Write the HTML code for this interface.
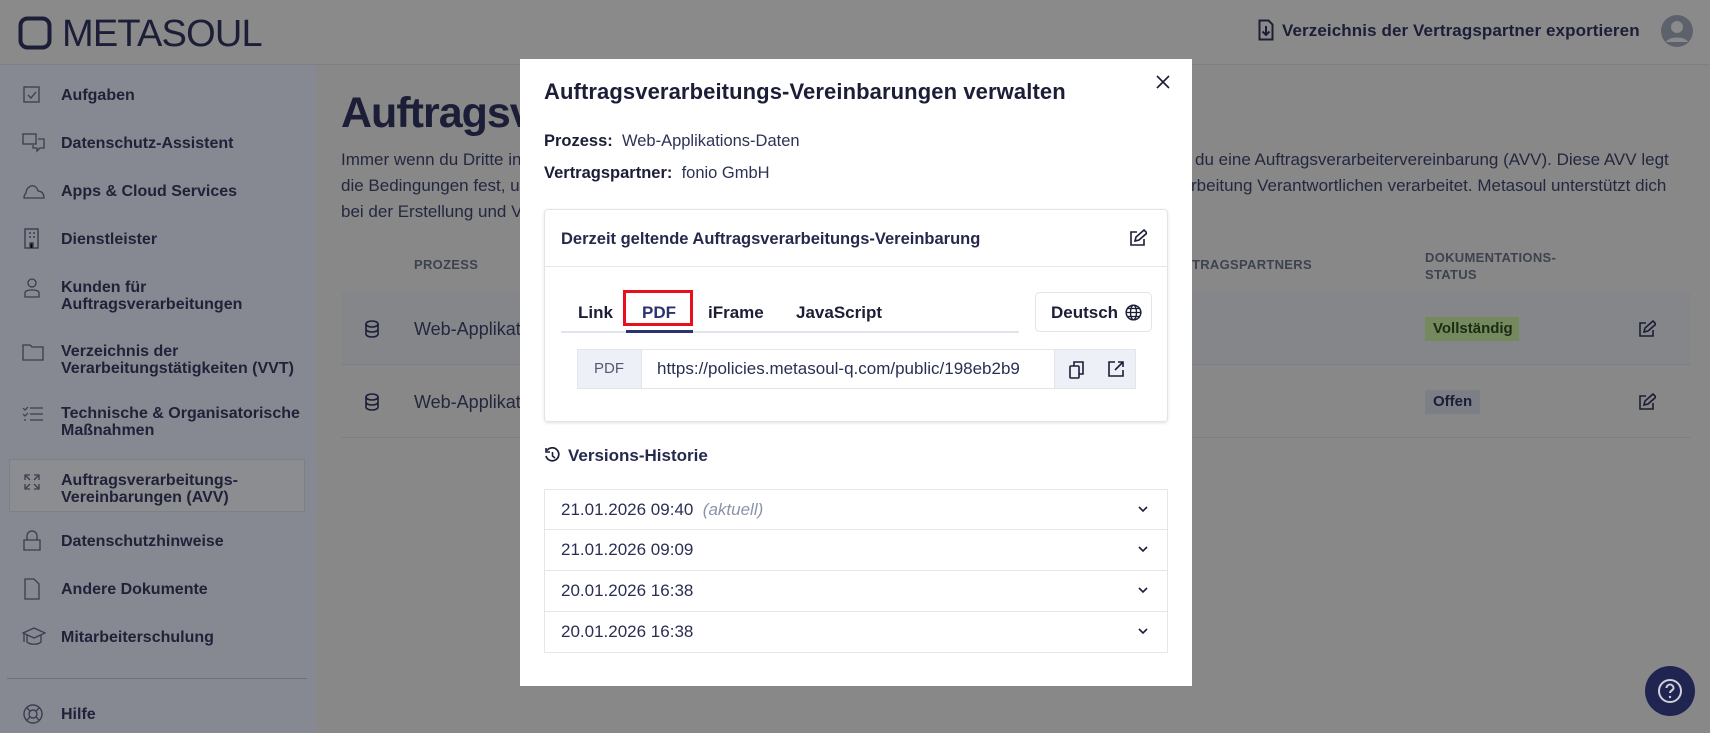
<!DOCTYPE html>
<html><head><meta charset="utf-8"><style>
*{margin:0;padding:0;box-sizing:border-box}
body{width:1710px;height:733px;overflow:hidden;background:#888888;font-family:"Liberation Sans",sans-serif;position:relative;color:#1b1e36}
.a{position:absolute;white-space:nowrap}
.hdr{position:absolute;left:0;top:0;width:1710px;height:65px;background:#8a8a8a;border-bottom:1px solid #7f7f80}
.side{position:absolute;left:0;top:65px;width:316px;height:668px;background:#868991}
.si{position:absolute;left:61px;font-size:16px;font-weight:bold;color:#1f2238;line-height:17px}
.ic{position:absolute;left:22px}
.mt{font-size:17px;color:#24283f}
.modal{position:absolute;left:520px;top:59px;width:672px;height:627px;background:#fff}
.m{position:absolute;white-space:nowrap}
.row{position:absolute;left:24px;width:624px;height:41px;border:1px solid #e3e6ed;border-top:none;font-size:17px;color:#2a2f52;padding-left:16px;line-height:40px}
.chev{position:absolute;right:18px;top:14px}
</style></head><body>
<div class="hdr"></div>
<svg class="a" style="left:18px;top:16px" width="34" height="34" viewBox="0 0 34 34"><rect x="2.5" y="2.5" width="29" height="29" rx="7" fill="none" stroke="#1b1e36" stroke-width="4"/></svg>
<div class="a" style="left:62px;top:13px;font-size:38px;color:#1b1e36;letter-spacing:-0.8px">METASOUL</div>
<svg class="a" style="left:1258px;top:19px" width="16" height="22" viewBox="0 0 16 22"><path d="M1.5 1.5h9l4 4v15h-13z" fill="none" stroke="#1b1e36" stroke-width="2"/><path d="M8 7v9M4.5 12.5L8 16l3.5-3.5" fill="none" stroke="#1b1e36" stroke-width="2"/></svg>
<div class="a" style="left:1282px;top:21px;font-size:17px;font-weight:bold;color:#1b1e36;letter-spacing:0.1px">Verzeichnis der Vertragspartner exportieren</div>
<svg class="a" style="left:1660px;top:14px" width="34" height="34" viewBox="0 0 34 34"><circle cx="17" cy="17" r="16" fill="#5d616b"/><circle cx="17" cy="13" r="6" fill="#8a8a8a"/><path d="M6 28c3-6 19-6 22 0" fill="#8a8a8a"/></svg>

<div class="side"></div>
<div class="a" style="left:9px;top:459px;width:296px;height:53px;background:#8c8d90;border:1px solid #7e8088"></div>
<svg class="ic" style="top:85px" width="20" height="20"><rect x="2" y="2" width="15" height="15" fill="none" stroke="#3a3d4e" stroke-width="1.3"/><path d="M6 10l3 3 5-6" fill="none" stroke="#3a3d4e" stroke-width="1.3"/></svg>
<div class="si" style="top:87px">Aufgaben</div>
<svg class="ic" style="top:133px" width="24" height="20"><rect x="1" y="1" width="13" height="10" fill="none" stroke="#3a3d4e" stroke-width="1.3"/><path d="M16 6h6v9h-4l-3 3v-3h-4v-3" fill="none" stroke="#3a3d4e" stroke-width="1.3"/></svg>
<div class="si" style="top:135px">Datenschutz-Assistent</div>
<svg class="ic" style="top:182px" width="24" height="18"><path d="M2 16h20c0-5-3-7-6-7-1-4-4-6-7-5-3 1-5 4-5 7-1 1-2 3-2 5z" fill="none" stroke="#3a3d4e" stroke-width="1.3"/></svg>
<div class="si" style="top:183px">Apps &amp; Cloud Services</div>
<svg class="ic" style="top:228px" width="20" height="22"><rect x="3" y="1" width="13" height="19" fill="none" stroke="#3a3d4e" stroke-width="1.4"/><path d="M7 5h2M11 5h2M7 9h2M11 9h2M8 20v-5h3v5" stroke="#3a3d4e" stroke-width="1.4"/></svg>
<div class="si" style="top:231px">Dienstleister</div>
<svg class="ic" style="top:277px" width="20" height="22"><circle cx="10" cy="6" r="4" fill="none" stroke="#3a3d4e" stroke-width="1.3"/><path d="M3 20v-4c0-2 2-3 7-3s7 1 7 3v4z" fill="none" stroke="#3a3d4e" stroke-width="1.3"/></svg>
<div class="si" style="top:279px">Kunden für<br>Auftragsverarbeitungen</div>
<svg class="ic" style="top:343px" width="22" height="18"><path d="M1 2h7l2 2h11v13H1z" fill="none" stroke="#3a3d4e" stroke-width="1.3"/></svg>
<div class="si" style="top:343px">Verzeichnis der<br>Verarbeitungstätigkeiten (VVT)</div>
<svg class="ic" style="top:405px" width="22" height="18"><path d="M8 3h13M8 9h13M8 15h13M1 3l2 2 3-3M1 9l2 2 3-3M2 15h2" fill="none" stroke="#3a3d4e" stroke-width="1.2"/></svg>
<div class="si" style="top:405px">Technische &amp; Organisatorische<br>Maßnahmen</div>
<svg class="ic" style="top:472px" width="20" height="20"><path d="M3 8V3h5M12 3h5v5M17 12v5h-5M8 17H3v-5M4 4l4 4M16 4l-4 4M16 16l-4-4M4 16l4-4" fill="none" stroke="#3a3d4e" stroke-width="1.3"/></svg>
<div class="si" style="top:472px">Auftragsverarbeitungs-<br>Vereinbarungen (AVV)</div>
<svg class="ic" style="top:530px" width="20" height="22"><path d="M5 10V6a5 5 0 0110 0v4M2 10h16v10H2z" fill="none" stroke="#3a3d4e" stroke-width="1.3"/></svg>
<div class="si" style="top:533px">Datenschutzhinweise</div>
<svg class="ic" style="top:578px" width="20" height="22"><path d="M3 1h9l5 5v15H3z" fill="none" stroke="#3a3d4e" stroke-width="1.3"/></svg>
<div class="si" style="top:581px">Andere Dokumente</div>
<svg class="ic" style="top:627px" width="24" height="20"><path d="M1 6l11-5 11 5-11 5zM5 8v7c3 3 11 3 14 0V8M2 7v8" fill="none" stroke="#3a3d4e" stroke-width="1.3"/></svg>
<div class="si" style="top:629px">Mitarbeiterschulung</div>
<div class="a" style="left:7px;top:678px;width:300px;height:1px;background:#6d7079"></div>
<svg class="ic" style="top:703px" width="22" height="22"><circle cx="11" cy="11" r="9" fill="none" stroke="#3a3d4e" stroke-width="1.4"/><circle cx="11" cy="11" r="4" fill="none" stroke="#3a3d4e" stroke-width="1.4"/><path d="M5 5l3 3M17 5l-3 3M5 17l3-3M17 17l-3-3" stroke="#3a3d4e" stroke-width="1.4"/></svg>
<div class="si" style="top:706px">Hilfe</div>

<div class="a" style="left:341px;top:89px;font-size:43px;font-weight:bold;color:#1b1e36;letter-spacing:-1px">Auftragsv</div>
<div class="a mt" style="left:341px;top:150px">Immer wenn du Dritte in</div>
<div class="a mt" style="left:341px;top:176px">die Bedingungen fest, u</div>
<div class="a mt" style="left:341px;top:202px">bei der Erstellung und V</div>
<div class="a mt" style="left:1195px;top:150px">du eine Auftragsverarbeitervereinbarung (AVV). Diese AVV legt</div>
<div class="a mt" style="left:1191px;top:176px">rbeitung Verantwortlichen verarbeitet. Metasoul unterstützt dich</div>
<div class="a" style="left:414px;top:257px;font-size:13px;font-weight:bold;color:#3e4250;letter-spacing:0.3px">PROZESS</div>
<div class="a" style="left:1192px;top:257px;font-size:13px;font-weight:bold;color:#3e4250;letter-spacing:0.3px">TRAGSPARTNERS</div>
<div class="a" style="left:1425px;top:249px;font-size:13px;font-weight:bold;color:#3e4250;letter-spacing:0.3px;line-height:17px">DOKUMENTATIONS-<br>STATUS</div>
<div class="a" style="left:341px;top:292px;width:1350px;height:73px;background:#85868a;border-bottom:1px solid #7d7f86"></div>
<div class="a" style="left:341px;top:437px;width:1350px;height:1px;background:#7d7f86"></div>
<svg class="a" style="left:364px;top:320px" width="16" height="18"><ellipse cx="8" cy="4" rx="6" ry="3" fill="none" stroke="#1b1e36" stroke-width="1.6"/><path d="M2 4v10c0 4 12 4 12 0V4M2 9c0 4 12 4 12 0" fill="none" stroke="#1b1e36" stroke-width="1.6"/></svg>
<svg class="a" style="left:364px;top:393px" width="16" height="18"><ellipse cx="8" cy="4" rx="6" ry="3" fill="none" stroke="#1b1e36" stroke-width="1.6"/><path d="M2 4v10c0 4 12 4 12 0V4M2 9c0 4 12 4 12 0" fill="none" stroke="#1b1e36" stroke-width="1.6"/></svg>
<div class="a" style="left:414px;top:319px;font-size:18px;color:#24283f">Web-Applikat</div>
<div class="a" style="left:414px;top:392px;font-size:18px;color:#24283f">Web-Applikat</div>
<div class="a" style="left:1425px;top:317px;width:94px;height:24px;background:#748a5e;font-size:15px;font-weight:bold;color:#1c2a14;line-height:24px;padding-left:8px">Vollständig</div>
<div class="a" style="left:1425px;top:390px;width:55px;height:24px;background:#7d7f87;font-size:15px;font-weight:bold;color:#1b1e36;line-height:24px;padding-left:8px">Offen</div>
<svg class="a" style="left:1638px;top:320px" width="18" height="18"><path d="M8 3H2v13h13v-6M6 12l1-4 8-7 3 3-8 7z" fill="none" stroke="#1b1e36" stroke-width="1.6"/></svg>
<svg class="a" style="left:1638px;top:393px" width="18" height="18"><path d="M8 3H2v13h13v-6M6 12l1-4 8-7 3 3-8 7z" fill="none" stroke="#1b1e36" stroke-width="1.6"/></svg>
<div class="a" style="left:1645px;top:666px;width:50px;height:50px;border-radius:50%;background:#1f2550"></div>
<svg class="a" style="left:1657px;top:678px" width="26" height="26"><circle cx="13" cy="13" r="11" fill="none" stroke="#cfd0d8" stroke-width="2"/><path d="M9.5 10a3.5 3.5 0 117 0c0 2.5-3.5 2.5-3.5 5" fill="none" stroke="#cfd0d8" stroke-width="2"/><circle cx="13" cy="19" r="1.2" fill="#cfd0d8"/></svg>

<div class="modal">
  <div class="m" style="left:24px;top:20px;font-size:22px;font-weight:bold;color:#1b1e36;letter-spacing:0.1px">Auftragsverarbeitungs-Vereinbarungen verwalten</div>
  <svg class="m" style="left:636px;top:16px" width="14" height="14"><path d="M1 1l12 12M13 1L1 13" stroke="#1b1e36" stroke-width="1.6"/></svg>
  <div class="m" style="left:24px;top:73px;font-size:16.5px;color:#1b1e36"><b>Prozess:</b>&nbsp; <span style="color:#2e3356">Web-Applikations-Daten</span></div>
  <div class="m" style="left:24px;top:105px;font-size:16.5px;color:#1b1e36"><b>Vertragspartner:</b>&nbsp; <span style="color:#2e3356">fonio GmbH</span></div>
  <div class="m" style="left:24px;top:150px;width:624px;height:213px;border:1px solid #e1e4ea;border-radius:4px;box-shadow:0 1px 3px rgba(0,0,0,0.12)">
    <div class="m" style="left:16px;top:20px;font-size:16.5px;font-weight:bold;color:#252a4d">Derzeit geltende Auftragsverarbeitungs-Vereinbarung</div>
    <svg class="m" style="left:584px;top:19px" width="18" height="18"><path d="M8 3H2v13h13v-6M6 12l1-4 8-7 3 3-8 7z" fill="none" stroke="#1b1e36" stroke-width="1.6"/></svg>
    <div class="m" style="left:0;top:56px;width:622px;height:1px;background:#e6e8ee"></div>
    <div class="m" style="left:16px;top:121px;width:458px;height:2px;background:#e1e4ec"></div>
    <div class="m" style="left:81px;top:120px;width:67px;height:3px;background:#2d3270"></div>
    <div class="m" style="left:33px;top:93px;font-size:17px;font-weight:bold;color:#1b1e36">Link</div>
    <div class="m" style="left:78px;top:80px;width:70px;height:36px;border:3px solid #e8101a"></div>
    <div class="m" style="left:97px;top:93px;font-size:17px;font-weight:bold;color:#2d3270">PDF</div>
    <div class="m" style="left:163px;top:93px;font-size:17px;font-weight:bold;color:#1b1e36">iFrame</div>
    <div class="m" style="left:251px;top:93px;font-size:17px;font-weight:bold;color:#1b1e36">JavaScript</div>
    <div class="m" style="left:490px;top:82px;width:117px;height:40px;border:1px solid #e1e4ea;border-radius:5px"></div>
    <div class="m" style="left:506px;top:93px;font-size:17px;font-weight:bold;color:#1b1e36">Deutsch</div>
    <svg class="m" style="left:580px;top:94px" width="17" height="17"><circle cx="8.5" cy="8.5" r="7.3" fill="none" stroke="#1b1e36" stroke-width="1.5"/><ellipse cx="8.5" cy="8.5" rx="3" ry="7.3" fill="none" stroke="#1b1e36" stroke-width="1.4"/><path d="M1.5 8.5h14M3 4.5h11M3 12.5h11" stroke="#1b1e36" stroke-width="1.3"/></svg>
    <div class="m" style="left:32px;top:139px;width:559px;height:40px;background:#edf1f7;border:1px solid #e1e5ec"></div>
    <div class="m" style="left:32px;top:139px;width:64px;height:40px;line-height:40px;text-align:center;font-size:15px;color:#555a70">PDF</div>
    <div class="m" style="left:96px;top:139px;width:414px;height:40px;background:#fff;border:1px solid #e1e5ec;line-height:38px;padding-left:15px;font-size:17px;color:#2a2f52;overflow:hidden">https://policies.metasoul-q.com/public/198eb2b9</div>
    <svg class="m" style="left:523px;top:150px" width="18" height="20"><rect x="2" y="6" width="9" height="12" rx="1" fill="none" stroke="#1b1e36" stroke-width="1.6"/><path d="M6 6V2h9v12h-4" fill="none" stroke="#1b1e36" stroke-width="1.6"/></svg>
    <svg class="m" style="left:562px;top:150px" width="18" height="18"><path d="M8 2H2v14h14v-6M11 2h5v5M16 2L8 10" fill="none" stroke="#1b1e36" stroke-width="1.6"/></svg>
  </div>
  <svg class="m" style="left:24px;top:388px" width="16" height="16"><path d="M3 3.5A6.5 6.5 0 112 9" fill="none" stroke="#1b1e36" stroke-width="1.7"/><path d="M2 1v4h4" fill="none" stroke="#1b1e36" stroke-width="1.6"/><path d="M8.5 5v4l2.5 2" fill="none" stroke="#1b1e36" stroke-width="1.6"/></svg>
  <div class="m" style="left:48px;top:387px;font-size:17px;font-weight:bold;color:#252a4d">Versions-Historie</div>
  <div class="row" style="top:430px;border-top:1px solid #e3e6ed">21.01.2026 09:40 &nbsp;<i style="color:#8c93ab">(aktuell)</i><svg class="chev" width="12" height="10"><path d="M2 3l4 4 4-4" fill="none" stroke="#1b1e36" stroke-width="1.6"/></svg></div>
  <div class="row" style="top:471px">21.01.2026 09:09<svg class="chev" width="12" height="10"><path d="M2 3l4 4 4-4" fill="none" stroke="#1b1e36" stroke-width="1.6"/></svg></div>
  <div class="row" style="top:512px">20.01.2026 16:38<svg class="chev" width="12" height="10"><path d="M2 3l4 4 4-4" fill="none" stroke="#1b1e36" stroke-width="1.6"/></svg></div>
  <div class="row" style="top:553px">20.01.2026 16:38<svg class="chev" width="12" height="10"><path d="M2 3l4 4 4-4" fill="none" stroke="#1b1e36" stroke-width="1.6"/></svg></div>
</div>
</body></html>
